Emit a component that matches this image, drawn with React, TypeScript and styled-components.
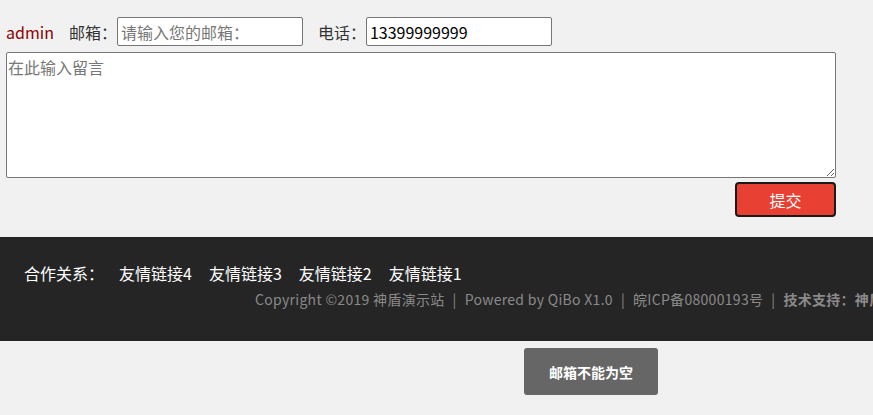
import React from "react";
import styled, { createGlobalStyle } from "styled-components";

const Global = createGlobalStyle`
  html, body { margin: 0; padding: 0; background: #f1f1f1; overflow: hidden; }
  body { font-family: "Noto Sans CJK SC", "Noto Sans", sans-serif; }
  * { box-sizing: border-box; }
`;

const Form = styled.div`
  padding: 17px 0 0 6px;
  width: 836px;
`;

const Row = styled.div`
  display: flex;
  align-items: center;
  height: 29px;
  font-size: 16px;
  color: #333;
`;

const User = styled.span`
  color: #8b0000;
  margin-right: 15px;
`;

const Label = styled.span<{ $gap?: number }>`
  margin-left: ${(p) => p.$gap ?? 0}px;
`;

const Input = styled.input`
  width: 186px;
  height: 29px;
  border: 1px solid #767676;
  border-radius: 2px;
  padding: 0 3px;
  font: 16px "Noto Sans CJK SC", sans-serif;
  color: #000;
  background: #fff;
  &::placeholder { color: #777; }
`;

const Area = styled.textarea`
  display: block;
  margin-top: 6px;
  width: 830px;
  height: 126px;
  border: 1px solid #767676;
  border-radius: 2px;
  padding: 2px 1px;
  font: 16px "Noto Sans CJK SC", sans-serif;
  resize: vertical;
  &::placeholder { color: #777; }
`;

const Actions = styled.div`
  display: flex;
  justify-content: flex-end;
  margin-top: 4px;
`;

const Submit = styled.button`
  width: 101px;
  height: 35px;
  background: #e84033;
  border: 2px solid #1a1a1a;
  border-radius: 4px;
  color: #fff;
  font: 16px "Noto Sans CJK SC", sans-serif;
  padding: 0;
`;

const Footer = styled.footer`
  margin-top: 20px;
  height: 104px;
  background: #252525;
  padding: 25px 0 0 24px;
`;

const Links = styled.div`
  display: flex;
  align-items: center;
  height: 22px;
  font-size: 16px;
  color: #fff;
`;

const LinksTitle = styled.span`
  width: 95px;
`;

const FLink = styled.a`
  color: #fff;
  text-decoration: none;
  margin-right: 17px;
`;

const Copy = styled.div`
  margin-top: 5px;
  padding-left: 231px;
  white-space: nowrap;
  font-size: 14px;
  letter-spacing: 0.3px;
  color: #8a8a8a;
  span.sep { margin: 0 8px; }
  b { font-weight: bold; }
`;

const Toast = styled.div`
  position: fixed;
  left: 524px;
  top: 348px;
  width: 134px;
  height: 47px;
  background: #666;
  border-radius: 3px;
  color: #fff;
  font-size: 14px;
  font-weight: bold;
  display: flex;
  align-items: center;
  justify-content: center;
`;

export default function App() {
  return (
    <>
      <Global />
      <Form>
        <Row>
          <User>admin</User>
          <Label>邮箱：</Label>
          <Input placeholder="请输入您的邮箱：" />
          <Label $gap={15}>电话：</Label>
          <Input defaultValue="13399999999" />
        </Row>
        <Area placeholder="在此输入留言" />
        <Actions>
          <Submit>提交</Submit>
        </Actions>
      </Form>
      <Footer>
        <Links>
          <LinksTitle>合作关系：</LinksTitle>
          <FLink href="#">友情链接4</FLink>
          <FLink href="#">友情链接3</FLink>
          <FLink href="#">友情链接2</FLink>
          <FLink href="#">友情链接1</FLink>
        </Links>
        <Copy>
          Copyright ©2019 神盾演示站<span className="sep">|</span>Powered by QiBo X1.0
          <span className="sep">|</span>皖ICP备08000193号<span className="sep">|</span>
          <b>技术支持：神盾网络</b>
        </Copy>
      </Footer>
      <Toast>邮箱不能为空</Toast>
    </>
  );
}
